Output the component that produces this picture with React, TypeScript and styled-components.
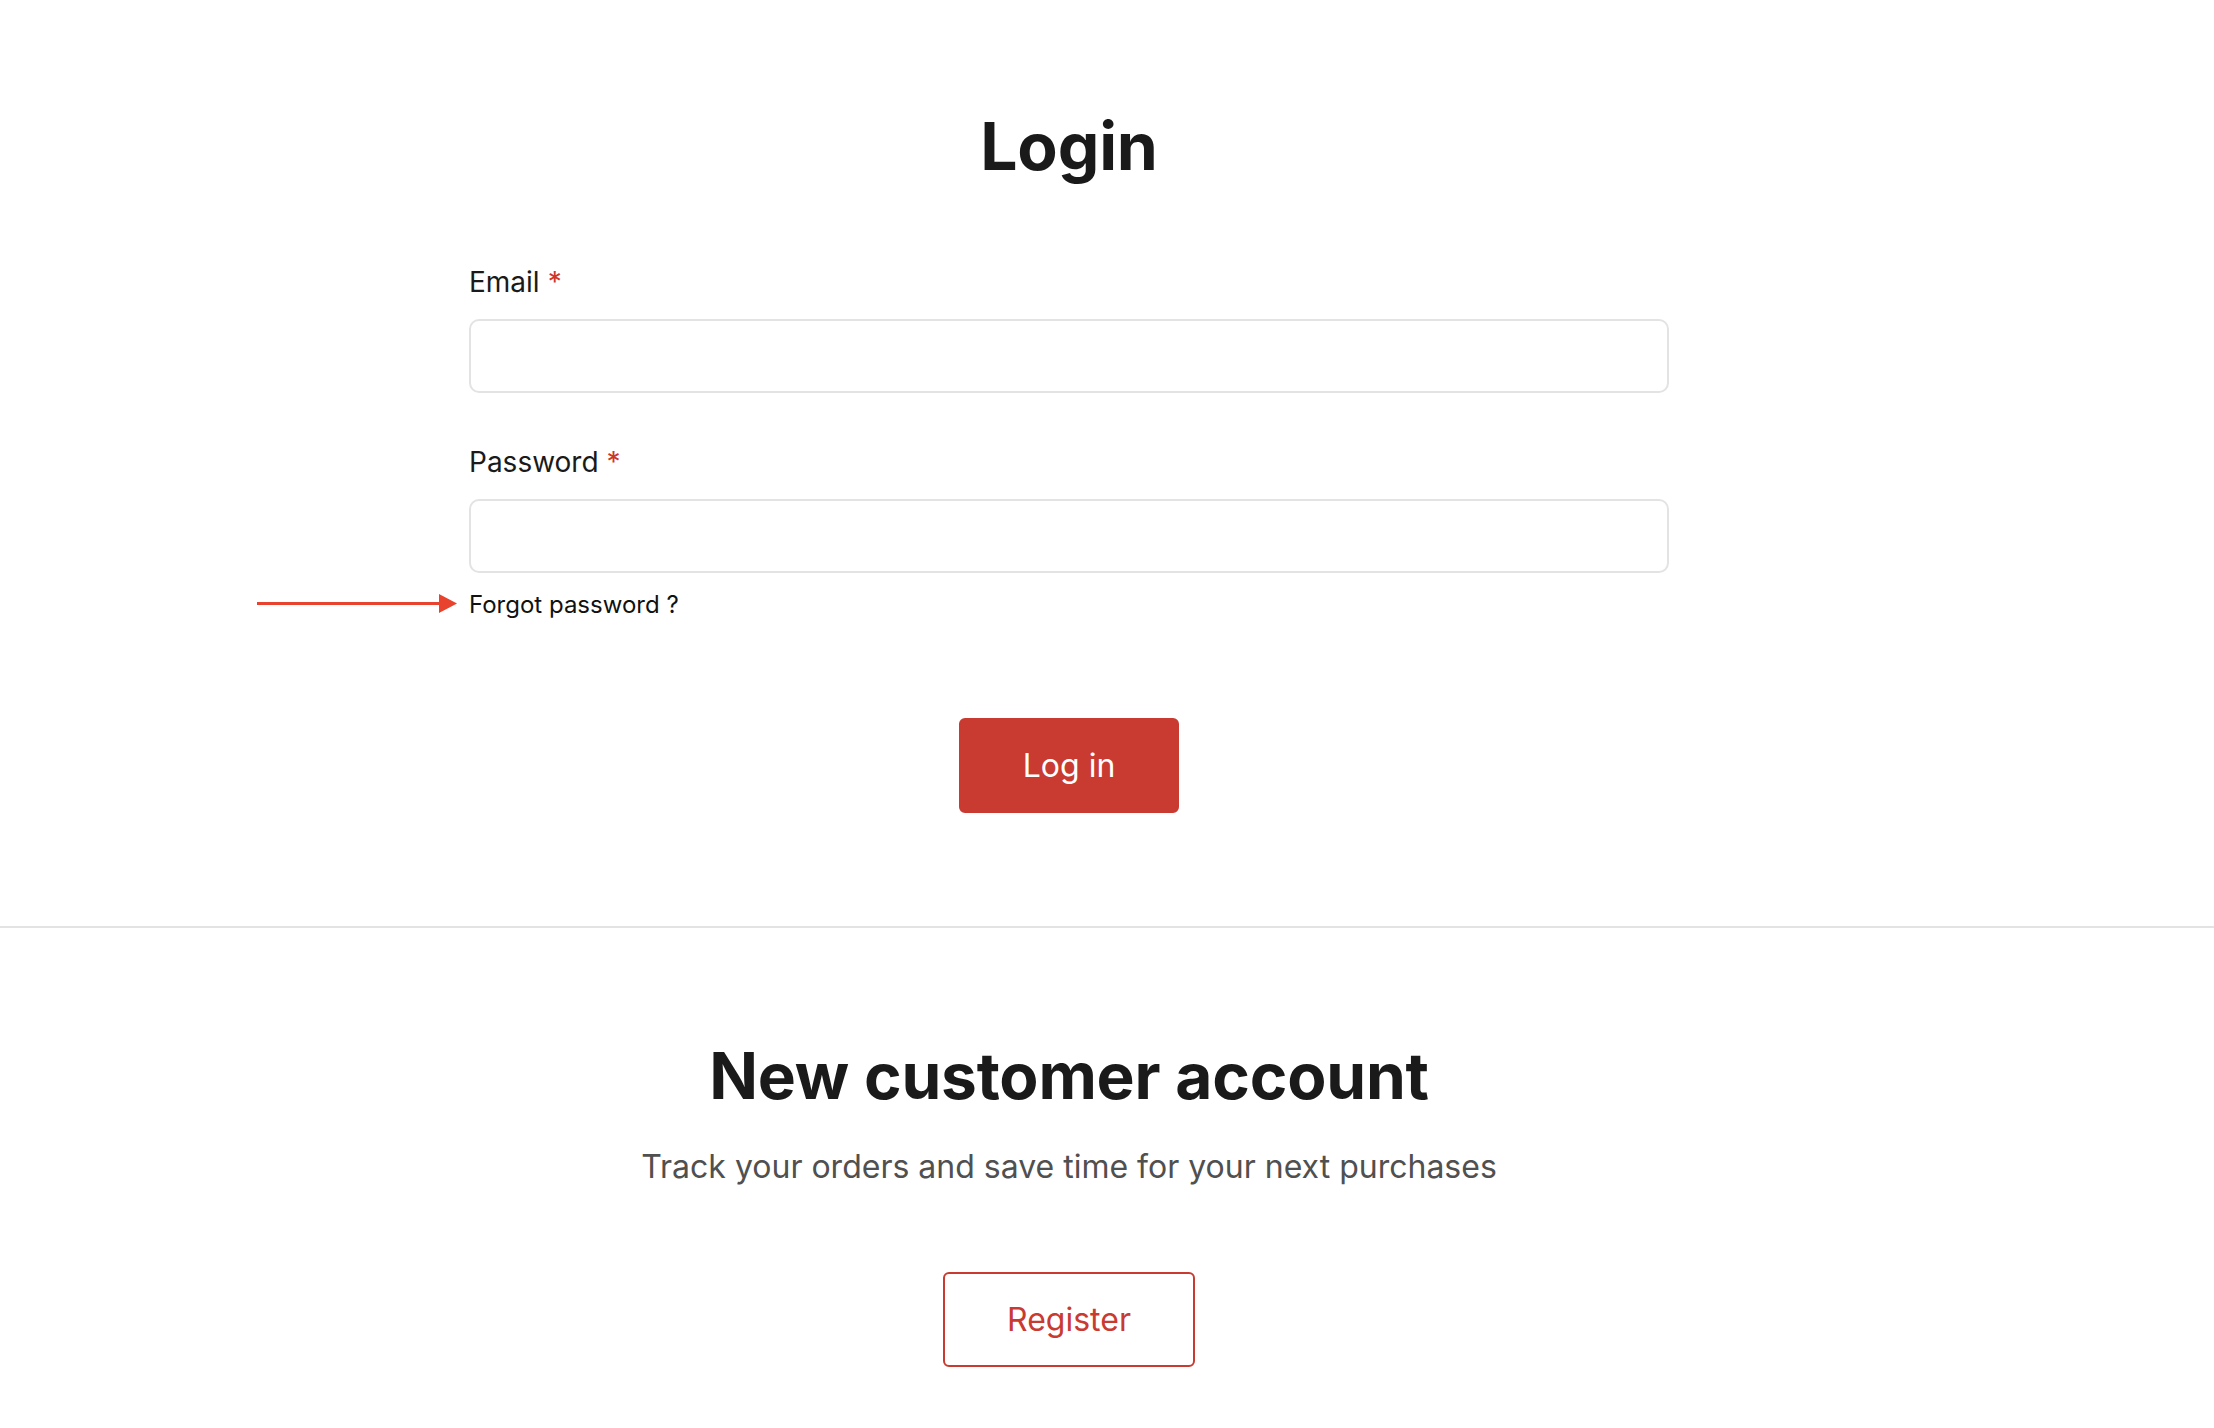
import React from 'react';
import styled, { createGlobalStyle } from 'styled-components';

const GlobalStyle = createGlobalStyle`
    html, body {
        margin: 0;
        padding: 0;
        background: #fff;
    }

    body {
        font-family: Inter, "Noto Sans", "Liberation Sans", sans-serif;
        color: #1a1a1a;
    }
`;

const Section = styled.section<{ $top: number; $bottom: number }>`
    display: flex;
    flex-direction: column;
    align-items: center;
    padding: ${(props) => props.$top}px 76px ${(props) => props.$bottom}px 0;
`;

const Divider = styled.hr`
    margin: 0;
    border: 0;
    height: 2px;
    background-color: #e3e3e3;
`;

const Title = styled.h1<{ $size: number }>`
    margin: 0;
    font-size: ${(props) => props.$size}px;
    line-height: ${(props) => Math.round(props.$size * 1.21)}px;
    font-weight: 700;
    color: #1a1a1a;
    letter-spacing: -0.2px;
`;

const Form = styled.form`
    width: 1200px;
    display: flex;
    flex-direction: column;
    margin-top: 78px;
`;

const Field = styled.div`
    display: flex;
    flex-direction: column;
    gap: 19px;

    & + & {
        margin-top: 51px;
    }
`;

const Label = styled.label`
    font-size: 28px;
    line-height: 36px;
    color: #1a1a1a;
`;

const Required = styled.span`
    color: #d0352b;
    margin-left: 8px;
`;

const Input = styled.input`
    box-sizing: border-box;
    width: 100%;
    height: 74px;
    border: 2px solid #e3e3e3;
    border-radius: 10px;
    background: #fff;
    padding: 0 20px;
    font-family: inherit;
    font-size: 26px;
    outline: none;
`;

const ForgotRow = styled.div`
    margin-top: 17px;
`;

const ForgotLink = styled.a`
    position: relative;
    display: inline-block;
    font-size: 24px;
    line-height: 30px;
    color: #111;
    text-decoration: none;
    cursor: pointer;
`;

// red pointer arrow sitting left of the link
const Pointer = styled.svg`
    position: absolute;
    right: calc(100% + 12px);
    top: 50%;
    transform: translateY(-58%);
`;

const ButtonRow = styled.div`
    display: flex;
    justify-content: center;
    margin-top: 98px;
`;

const Button = styled.button<{ $outline?: boolean }>`
    box-sizing: border-box;
    height: 95px;
    padding: 0 62px;
    border: 2px solid #c93a31;
    border-radius: 6px;
    background-color: ${(props) => props.$outline ? '#fff' : '#c93a31'};
    color: ${(props) => props.$outline ? '#c93a31' : '#fff'};
    font-family: inherit;
    font-size: 32px;
    cursor: pointer;
`;

const Subtitle = styled.p`
    margin: 32px 0 0;
    font-size: 32px;
    line-height: 42px;
    color: #505050;
`;

const RegisterRow = styled.div`
    margin-top: 84px;
`;

const App = () => {
    return (
        <>
            <GlobalStyle />
            <Section $top={106} $bottom={113}>
                <Title $size={66}>Login</Title>
                <Form onSubmit={(e) => e.preventDefault()}>
                    <Field>
                        <Label htmlFor="email">Email<Required>*</Required></Label>
                        <Input id="email" type="email" />
                    </Field>
                    <Field>
                        <Label htmlFor="password">Password<Required>*</Required></Label>
                        <Input id="password" type="password" />
                    </Field>
                    <ForgotRow>
                        <ForgotLink>
                            <Pointer width="200" height="20" viewBox="0 0 200 20">
                                <line x1="0" y1="10" x2="184" y2="10" stroke="#e8432e" strokeWidth="3" />
                                <polygon points="182,0.5 200,10 182,19.5" fill="#e8432e" />
                            </Pointer>
                            Forgot password ?
                        </ForgotLink>
                    </ForgotRow>
                    <ButtonRow>
                        <Button type="submit">Log in</Button>
                    </ButtonRow>
                </Form>
            </Section>
            <Divider />
            <Section $top={109} $bottom={60}>
                <Title $size={64}>New customer account</Title>
                <Subtitle>Track your orders and save time for your next purchases</Subtitle>
                <RegisterRow>
                    <Button $outline type="button">Register</Button>
                </RegisterRow>
            </Section>
        </>
    );
};

export default App;
